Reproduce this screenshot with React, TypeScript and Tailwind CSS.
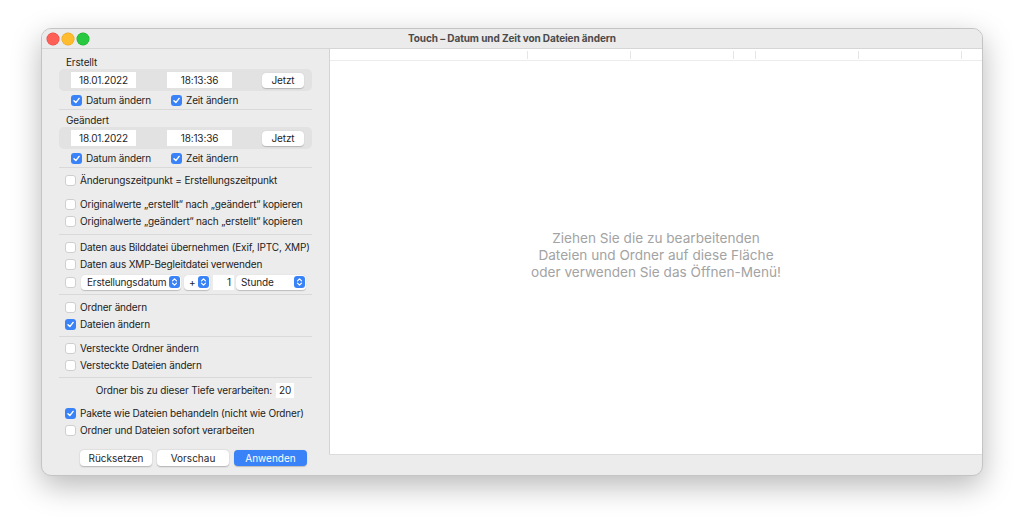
const FONT = { fontFamily: 'Inter, "Noto Sans", "Liberation Sans", sans-serif' }

function Check({ on = false }: { on?: boolean }) {
  if (on) {
    return (
      <span className="flex h-[11px] w-[11px] shrink-0 items-center justify-center rounded-[3px] bg-[#3a82f7]">
        <svg width="9" height="9" viewBox="0 0 10 10">
          <path d="M2.2 5.2 L4.3 7.3 L7.9 2.7" fill="none" stroke="white" strokeWidth="1.6" strokeLinecap="round" strokeLinejoin="round" />
        </svg>
      </span>
    )
  }
  return <span className="h-[11px] w-[11px] shrink-0 rounded-[3px] border border-[#cfcfcf] bg-white" />
}

function Row({ on, children }: { on?: boolean; children: React.ReactNode }) {
  return (
    <div className="flex h-[17px] items-center gap-[4px] pl-[6px]">
      <Check on={on} />
      <span className="whitespace-nowrap text-[10px] tracking-[-0.15px] text-[#222]">{children}</span>
    </div>
  )
}

function Stepper() {
  return (
    <span className="flex h-[12px] w-[11px] shrink-0 items-center justify-center rounded-[3px] bg-[#3a82f7]">
      <svg width="7" height="10" viewBox="0 0 7 10">
        <path d="M1.5 3.8 L3.5 1.8 L5.5 3.8 M1.5 6.2 L3.5 8.2 L5.5 6.2" fill="none" stroke="white" strokeWidth="1.2" strokeLinecap="round" strokeLinejoin="round" />
      </svg>
    </span>
  )
}

function Sep() {
  return <div className="h-px bg-[#d9d9d9]" />
}

const T = 'whitespace-nowrap text-[10px] tracking-[-0.15px] text-[#1f1f1f]'

function DateGroup({ label }: { label: string }) {
  return (
    <>
      <div className={'flex h-[14px] items-center pl-[7px] ' + T}>{label}</div>
      <div className="flex h-[22px] items-center rounded-[5px] bg-[#e2e2e2] pl-[12px] pr-[8px]">
        <div className={'flex h-[16px] w-[65px] items-center justify-center bg-white ' + T}>18.01.2022</div>
        <div className={'ml-[31px] flex h-[16px] w-[65px] items-center justify-center bg-white ' + T}>18:13:36</div>
        <div className={'ml-auto flex h-[15px] w-[42px] items-center justify-center rounded-[4px] bg-white shadow-[0_0.5px_1px_rgba(0,0,0,0.2)] ' + T}>Jetzt</div>
      </div>
      <div className="flex h-[18px] items-center pl-[12px]">
        <div className="flex w-[100px] items-center gap-[4px]">
          <Check on />
          <span className={T}>Datum ändern</span>
        </div>
        <div className="flex items-center gap-[4px]">
          <Check on />
          <span className={T}>Zeit ändern</span>
        </div>
      </div>
    </>
  )
}

function Button({ children, primary }: { children: React.ReactNode; primary?: boolean }) {
  return (
    <div
      className={
        primary
          ? 'flex h-[16px] w-[73px] items-center justify-center whitespace-nowrap rounded-[4px] bg-[#3a82f7] text-[10px] text-white shadow-[0_0.5px_1px_rgba(0,0,0,0.2)]'
          : 'flex h-[16px] w-[72px] items-center justify-center whitespace-nowrap rounded-[4px] bg-white text-[10px] text-[#1f1f1f] shadow-[0_0.5px_1.5px_rgba(0,0,0,0.25)]'
      }
    >
      {children}
    </div>
  )
}

function LeftPanel() {
  return (
    <div className="flex w-[287px] shrink-0 flex-col pl-[17px] pr-[17px] pt-[6px]">
      <DateGroup label="Erstellt" />
      <Sep />
      <div className="mt-[3px]" />
      <DateGroup label="Geändert" />
      <Sep />

      <div className="mt-[4px]" />
      <Row>Änderungszeitpunkt = Erstellungszeitpunkt</Row>
      <div className="mt-[7px]" />
      <Row>Originalwerte „erstellt“ nach „geändert“ kopieren</Row>
      <Row>Originalwerte „geändert“ nach „erstellt“ kopieren</Row>
      <div className="mt-[4px]" />
      <Sep />

      <div className="mt-[4px]" />
      <Row>Daten aus Bilddatei übernehmen (Exif, IPTC, XMP)</Row>
      <Row>Daten aus XMP-Begleitdatei verwenden</Row>
      <div className="flex h-[18px] items-center pl-[6px]">
        <Check />
        <div className="ml-[5px] flex h-[15px] w-[100px] items-center justify-between rounded-[4px] bg-white pl-[6px] pr-[1.5px] shadow-[0_0.5px_1px_rgba(0,0,0,0.2)]">
          <span className={T}>Erstellungsdatum</span>
          <Stepper />
        </div>
        <div className="ml-[3px] flex h-[15px] w-[26px] items-center justify-between rounded-[4px] bg-white pl-[5px] pr-[1.5px] shadow-[0_0.5px_1px_rgba(0,0,0,0.2)]">
          <span className={T}>+</span>
          <Stepper />
        </div>
        <div className={'ml-[3px] flex h-[15px] w-[21px] items-center justify-end bg-white pr-[3px] ' + T}>1</div>
        <div className="ml-[2px] flex h-[15px] w-[70px] items-center justify-between rounded-[4px] bg-white pl-[5px] pr-[1.5px] shadow-[0_0.5px_1px_rgba(0,0,0,0.2)]">
          <span className={T}>Stunde</span>
          <Stepper />
        </div>
      </div>
      <div className="mt-[3px]" />
      <Sep />

      <div className="mt-[4px]" />
      <Row>Ordner ändern</Row>
      <Row on>Dateien ändern</Row>
      <div className="mt-[3px]" />
      <Sep />

      <div className="mt-[3px]" />
      <Row>Versteckte Ordner ändern</Row>
      <Row>Versteckte Dateien ändern</Row>
      <div className="mt-[3px]" />
      <Sep />

      <div className="mt-[3px] flex h-[18px] items-center justify-end pr-[18px]">
        <span className={T}>Ordner bis zu dieser Tiefe verarbeiten:</span>
        <div className={'ml-[4px] flex h-[15px] w-[18px] items-center justify-center bg-white ' + T}>20</div>
      </div>
      <div className="mt-[6px]" />
      <Row on>Pakete wie Dateien behandeln (nicht wie Ordner)</Row>
      <Row>Ordner und Dateien sofort verarbeiten</Row>

      <div className="mt-[11px] flex gap-[5px] pl-[21px]">
        <Button>Rücksetzen</Button>
        <Button>Vorschau</Button>
        <Button primary>Anwenden</Button>
      </div>
    </div>
  )
}

const COLS = [198, 103, 103, 22, 103, 103]

function RightPane() {
  return (
    <div className="flex flex-1 flex-col">
      <div className="flex flex-1 flex-col border-l border-[#d4d4d4] bg-white">
        <div className="flex h-[12px] border-b border-[#ececec]">
          {COLS.map((w, i) => (
            <div key={i} style={{ width: w }} className="flex items-center justify-end">
              <div className="h-[8px] w-px bg-[#e6e6e6]" />
            </div>
          ))}
        </div>
        <div className="flex flex-1 items-center justify-center pb-[4px]">
          <div className="whitespace-nowrap text-center text-[13.6px] leading-[17px] text-[#a3a3a3]">
            Ziehen Sie die zu bearbeitenden
            <br />
            Dateien und Ordner auf diese Fläche
            <br />
            oder verwenden Sie das Öffnen-Menü!
          </div>
        </div>
      </div>
      <div className="h-[21px] border-t border-[#dcdcdc]" />
    </div>
  )
}

export default function App() {
  return (
    <div style={FONT} className="h-[531px] w-[1024px] overflow-hidden bg-white pl-[41px] pt-[28px]">
      <div className="flex h-[448px] w-[942px] flex-col overflow-hidden rounded-[10px] border border-[#c4c4c4] bg-[#ececec] shadow-[0_10px_30px_rgba(0,0,0,0.28)]">
        <div className="relative flex h-[20px] items-center border-b border-[#d6d6d6] bg-[#ebebeb]">
          <div className="flex gap-[3px] pl-[5px]">
            <span className="h-[12px] w-[12px] rounded-full bg-[#fe5f57] ring-[0.5px] ring-[#e2463f]" />
            <span className="h-[12px] w-[12px] rounded-full bg-[#febc2e] ring-[0.5px] ring-[#e1a116]" />
            <span className="h-[12px] w-[12px] rounded-full bg-[#28c840] ring-[0.5px] ring-[#1aab29]" />
          </div>
          <div className="absolute inset-0 flex items-center justify-center whitespace-nowrap text-[10px] font-bold tracking-[-0.1px] text-[#4a4a4a]">
            Touch – Datum und Zeit von Dateien ändern
          </div>
        </div>
        <div className="flex flex-1">
          <LeftPanel />
          <RightPane />
        </div>
      </div>
    </div>
  )
}
